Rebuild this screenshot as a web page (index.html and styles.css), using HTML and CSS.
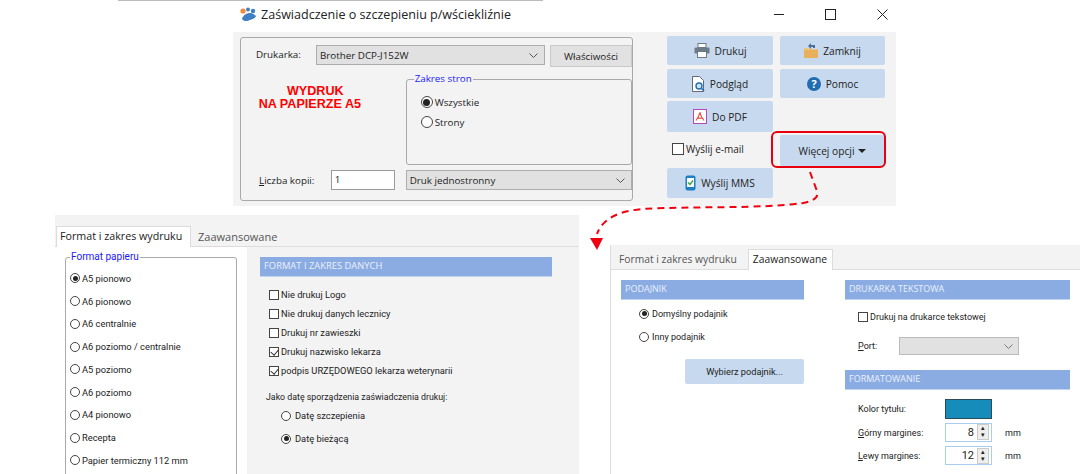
FILE: index.html
```html
<!DOCTYPE html>
<html lang="pl">
<head>
<meta charset="utf-8">
<title>Zaświadczenie o szczepieniu</title>
<link rel="stylesheet" href="styles.css">
</head>
<body>
<div class="canvas">
  <div class="top-rule"></div>

  <section class="win win-print">
    <header class="titlebar">
      <svg class="logo" width="17" height="15" viewBox="0 0 17 15"><circle cx="3" cy="4" r="2.6" fill="#f08a3c"/><circle cx="8" cy="2.6" r="2" fill="#3f7fc4"/><circle cx="13" cy="4" r="2.2" fill="#3f7fc4"/><path d="M2 12c1-4 5-6 8-6s5 2 6 3c-1 3-4 3-6 4s-6 2-8-1z" fill="#3f7fc4"/></svg>
      <h1 class="title">Zaświadczenie o szczepieniu p/wściekliźnie</h1>
      <div class="controls">
        <svg width="11" height="11" viewBox="0 0 11 11"><path d="M1 5.5h10" stroke="#222" fill="none"/></svg>
        <svg width="11" height="11" viewBox="0 0 11 11"><rect x=".5" y=".5" width="10" height="10" stroke="#222" fill="none"/></svg>
        <svg width="11" height="11" viewBox="0 0 11 11"><path d="M.5.5l10 10M10.5.5l-10 10" stroke="#222" fill="none"/></svg>
      </div>
    </header>
    <div class="print-body">
      <div class="group">
        <div class="row-printer">
          <span class="lbl-printer">Drukarka:</span>
          <div class="select select-printer">Brother DCP-J152W<svg class="chev" width="9" height="5" viewBox="0 0 9 5"><path d="M.5.5l4 4 4-4" fill="none" stroke="#555"/></svg></div>
          <button class="btn-gray">Właściwości</button>
        </div>
        <div class="row-middle">
          <p class="a5-note">WYDRUK<br>NA PAPIERZE A5</p>
          <fieldset class="range">
            <legend>Zakres stron</legend>
            <label class="opt opt-range"><input type="radio" name="r1" checked>Wszystkie</label>
            <label class="opt opt-range"><input type="radio" name="r1">Strony</label>
          </fieldset>
        </div>
        <div class="row-copies">
          <span class="lbl-copies"><u>L</u>iczba kopii:</span>
          <div class="field-copies">1</div>
          <div class="select select-duplex">Druk jednostronny<svg class="chev" width="9" height="5" viewBox="0 0 9 5"><path d="M.5.5l4 4 4-4" fill="none" stroke="#555"/></svg></div>
        </div>
      </div>
      <div class="actions">
        <button class="btn h29">
          <svg width="16" height="15" viewBox="0 0 16 15"><rect x="4" y="0.5" width="8" height="4" fill="#fff" stroke="#6d7a88"/><rect x="0.5" y="4.5" width="15" height="6" rx="1" fill="#6d7a88"/><rect x="3.5" y="8.5" width="9" height="6" fill="#fff" stroke="#6d7a88"/></svg>Drukuj</button>
        <button class="btn h29">
          <svg class="i-zamk" width="14" height="15" viewBox="0 0 14 15"><path d="M0 5h5l1 1h8v9H0z" fill="#efc27a"/><path d="M0 7h14v8H0z" fill="#e9b05c"/><path d="M4 3l3-3v2h4v3H9V4H7v2z" fill="#4a6f99"/></svg>Zamknij</button>
        <button class="btn h29 pad-podglad">
          <svg width="13" height="16" viewBox="0 0 13 16"><path d="M.5.5h7l4 4v11H.5z" fill="#fff" stroke="#667"/><circle cx="7" cy="10" r="3" fill="#cfe4f6" stroke="#1f6fb5" stroke-width="1.4"/><path d="M9 12l3 3" stroke="#1f6fb5" stroke-width="1.6"/></svg>Podgląd</button>
        <button class="btn h29">
          <svg width="14" height="14" viewBox="0 0 14 14"><circle cx="7" cy="7" r="7" fill="#1f6cb0"/><text class="qmark" x="7" y="11" text-anchor="middle">?</text></svg>Pomoc</button>
        <button class="btn h31">
          <svg width="14" height="15" viewBox="0 0 14 15"><rect x="0.5" y="0.5" width="13" height="14" fill="#fff" stroke="#b348b8"/><path d="M7 3c-.6 3-2 6-4 8.500M7 3c.2 3 2 6 4 8.500M4 9.500c2-.6 4-.6 6.500 0" fill="none" stroke="#e2574c" stroke-width="1.2"/></svg>Do PDF</button>
        <div class="slot-empty"></div>
        <label class="opt opt-mail"><input type="checkbox">Wyślij e-mail</label>
        <button class="btn h31 btn-more">Więcej opcji<span class="caret"></span></button>
        <button class="btn h30">
          <svg width="11" height="16" viewBox="0 0 11 16"><rect x="0.5" y="0.5" width="10" height="15" rx="2" fill="#1d7fc4"/><rect x="2" y="3" width="7" height="9" fill="#fff"/><path d="M3 7.500l2 2 3-4" stroke="#3aa53a" stroke-width="1.4" fill="none"/></svg>Wyślij MMS</button>
      </div>
    </div>
  </section>

  <section class="win win-format">
    <div class="tabbar tabbar-left">
      <span class="tab tab-on tab-a">Format i zakres wydruku</span>
      <span class="tab tab-off">Zaawansowane</span>
    </div>
    <div class="format-body">
      <div class="paper-col">
        <fieldset class="paper">
          <legend>Format papieru</legend>
          <label class="opt opt-paper"><input type="radio" name="p" checked>A5 pionowo</label>
          <label class="opt opt-paper"><input type="radio" name="p">A6 pionowo</label>
          <label class="opt opt-paper"><input type="radio" name="p">A6 centralnie</label>
          <label class="opt opt-paper"><input type="radio" name="p">A6 poziomo / centralnie</label>
          <label class="opt opt-paper"><input type="radio" name="p">A5 poziomo</label>
          <label class="opt opt-paper"><input type="radio" name="p">A6 poziomo</label>
          <label class="opt opt-paper"><input type="radio" name="p">A4 pionowo</label>
          <label class="opt opt-paper"><input type="radio" name="p">Recepta</label>
          <label class="opt opt-paper"><input type="radio" name="p">Papier termiczny 112 mm</label>
        </fieldset>
      </div>
      <div class="data-col">
        <h2 class="band band-data">FORMAT I ZAKRES DANYCH</h2>
        <div class="checks">
          <label class="opt"><input type="checkbox">Nie drukuj Logo</label>
          <label class="opt"><input type="checkbox">Nie drukuj danych lecznicy</label>
          <label class="opt"><input type="checkbox">Drukuj nr zawieszki</label>
          <label class="opt"><input type="checkbox" checked>Drukuj nazwisko lekarza</label>
          <label class="opt"><input type="checkbox" checked>podpis URZĘDOWEGO lekarza weterynarii</label>
        </div>
        <p class="date-lbl">Jako datę sporządzenia zaświadczenia drukuj:</p>
        <div class="date-opts">
          <label class="opt"><input type="radio" name="d">Datę szczepienia</label>
          <label class="opt"><input type="radio" name="d" checked>Datę bieżącą</label>
        </div>
      </div>
    </div>
  </section>

  <section class="win win-adv">
    <div class="tabbar tabbar-right">
      <span class="tab tab-off tab-first">Format i zakres wydruku</span>
      <span class="tab tab-on tab-b">Zaawansowane</span>
    </div>
    <div class="adv-body">
      <div class="adv-left">
        <h2 class="band">PODAJNIK</h2>
        <div class="feed-opts">
          <label class="opt"><input type="radio" name="f" checked>Domyślny podajnik</label>
          <label class="opt"><input type="radio" name="f">Inny podajnik</label>
        </div>
        <button class="btn btn-feed">Wybierz podajnik...</button>
      </div>
      <div class="adv-right">
        <h2 class="band">DRUKARKA TEKSTOWA</h2>
        <label class="opt opt-text"><input type="checkbox">Drukuj na drukarce tekstowej</label>
        <div class="port-row">
          <span class="port-lbl"><u>P</u>ort:</span>
          <div class="select select-port"><svg class="chev" width="9" height="5" viewBox="0 0 9 5"><path d="M.5.5l4 4 4-4" fill="none" stroke="#777"/></svg></div>
        </div>
        <h2 class="band band-fmt">FORMATOWANIE</h2>
        <div class="fmt-grid">
          <span>Kolor tytułu:</span><div class="swatch"></div><span></span>
          <span><u>G</u>órny margines:</span>
          <div class="spin">8<span class="spin-btns"><i>▴</i><i>▾</i></span></div><span>mm</span>
          <span><u>L</u>ewy margines:</span>
          <div class="spin">12<span class="spin-btns"><i>▴</i><i>▾</i></span></div><span>mm</span>
        </div>
      </div>
    </div>
  </section>

  <svg class="arrow" width="1080" height="474" viewBox="0 0 1080 474">
    <path d="M810 172l7 19c2 7-4 10-14 12-40 6-110 3-160 6-24 2-40 9-46 25" fill="none" stroke="#f0000f" stroke-width="2" stroke-dasharray="7 5"/>
    <path d="M590 238h13l-6 12z" fill="#f0000f"/>
  </svg>
</div>
</body>
</html>
```

FILE: styles.css
```css
* { box-sizing: border-box; }
html, body { margin: 0; padding: 0; background: #fff; }
body { font-family: "Open Sans", "Noto Sans", sans-serif; font-size: 9.8px; color: #222; }
p, h1, h2 { margin: 0; font-weight: 400; }
button { font: inherit; color: inherit; cursor: default; }

.canvas { position: relative; width: 1080px; height: 474px; overflow: hidden; background: #fff; }
.top-rule { position: absolute; left: 118px; top: 0; width: 425px; height: 1px; background: #bbb; }
.win { position: absolute; }
.arrow { position: absolute; left: 0; top: 0; pointer-events: none; }

/* print window */
.win-print { left: 233px; top: 0; width: 663px; height: 206px; }
.titlebar { display: flex; align-items: center; height: 32px; padding-left: 7px; }
.logo { flex: none; margin-top: -3px; }
.title { margin-left: 4px; font-size: 12.55px; margin-top: -3px; }
.controls { display: flex; gap: 41px; margin-left: auto; margin-right: 8px; margin-top: -3px; }
.print-body { display: flex; height: 174px; background: #f3f3f3; padding: 4px 0 0 7px; }
.group { width: 393px; height: 164px; margin-top: 1px; border: 1px solid #a9a9a9; border-radius: 3px; padding: 7px 0 0 15px; }
.row-printer { display: flex; align-items: flex-start; }
.lbl-printer { width: 60px; line-height: 20px; }
.select { display: flex; align-items: center; justify-content: space-between; background: #e1e1e1; border: 1px solid #adadad; padding: 0 6px 0 3px; height: 20px; }
.select-printer { width: 229px; }
.btn-gray { margin-left: 5px; width: 82px; height: 22px; background: #e1e1e1; border: 1px solid #c9c9c9; padding: 0; }
.row-middle { display: flex; height: 93px; margin-top: 5px; }
.a5-note { width: 108px; margin-top: 13px; text-align: center; text-indent: 11px; color: #f00; font-family: "Liberation Sans", Arial, sans-serif; font-weight: 700; font-size: 12.6px; line-height: 13px; }
.range { margin: 0 0 0 42px; padding: 6px 0 0 14px; width: 227px; height: 93px; border: 1px solid #a9a9a9; border-radius: 3px; }
.range legend, .paper legend { color: #1a1aff; padding: 0 1px; line-height: 14px; }
.range legend { margin-left: -7px; }
.opt { display: flex; align-items: center; }
.opt input { appearance: none; margin: 0 2px 0 0; flex: none; width: 10px; height: 10px; border: 1px solid #444; background: #fff; position: relative; }
.opt input[type=radio] { border-radius: 50%; }
.opt input[type=radio]:checked::after { content: ""; position: absolute; inset: 1.500px; border-radius: 50%; background: #222; }
.opt input[type=checkbox]:checked::after { content: ""; position: absolute; left: 2px; top: 0; width: 4px; height: 6px; border: solid #333; border-width: 0 1px 1px 0; transform: rotate(40deg); }
.opt-range { height: 20px; }
.opt-range input { width: 12px; height: 12px; }
.row-copies { display: flex; align-items: center; margin-top: 5px; }
.lbl-copies { width: 75px; padding-left: 3px; }
.field-copies { width: 64px; height: 20px; background: #fff; border: 1px solid #9a9a9a; padding-left: 3px; line-height: 17px; }
.select-duplex { width: 227px; margin-left: 11px; }

.actions { display: grid; grid-template-columns: 113px 105px; grid-template-rows: 33px 32px 34px 33px 30px; margin-left: 34px; }
.btn { display: flex; align-items: center; justify-content: center; gap: 5px; background: #c7d9ee; border: 0; border-radius: 2px; padding: 0; width: 106px; font-size: 10.2px; }
.actions > .btn:nth-child(even) { width: 105px; }
.h29 { height: 29px; }
.h31 { height: 31px; }
.h30 { height: 30px; }
.slot-empty { height: 31px; }
.opt-mail { padding-left: 5px; height: 27px; font-size: 10px; }
.opt-mail input { width: 12px; height: 12px; }
.btn-more { position: relative; gap: 4px; }
.btn-more::after { content: ""; position: absolute; left: -9px; right: -1px; top: -4px; bottom: -2px; border: 2px solid #e8000f; border-radius: 6px; }
.caret { width: 0; height: 0; border: 4px solid transparent; border-top-color: #222; border-bottom: 0; margin-top: 1px; }
.qmark { font: 700 11px "Open Sans", sans-serif; fill: #fff; }

/* tabs */
.tabbar { display: flex; align-items: flex-end; background: #f3f3f3; border-bottom: 1px solid #dcdcdc; }
.tab { line-height: 19px; }
.tab-off { color: #555; }
.tab-on { background: #fff; border: 1px solid #dcdcdc; border-bottom: 0; height: 21px; position: relative; top: 1px; }

/* format window */
.win-format { left: 55px; top: 215px; width: 524px; height: 259px; }
.tabbar-left { height: 32px; padding-left: 1px; font-size: 10.7px; }
.tab-a { width: 135px; padding-left: 3px; }
.tabbar-left .tab-off { margin-left: 7px; font-size: 11px; }
.format-body { display: flex; height: 227px; font-family: Roboto, "Open Sans", sans-serif; font-size: 9.3px; }
.paper-col { width: 192px; background: #fff; padding: 3px 0 0 10px; }
.paper { margin: 0; width: 172px; height: 240px; border: 1px solid #a9a9a9; border-radius: 3px; padding: 3px 0 0 4px; }
.paper legend { margin-left: 0; font-size: 10px; }
.opt-paper { height: 22.75px; }
.data-col { flex: 1; background: #f3f3f3; padding: 10px 0 0 13px; }
.band { background: #8aace3; color: #eaf0fb; font-family: "Open Sans", sans-serif; font-size: 9px; padding-left: 4px; line-height: 18px; height: 20px; width: 183px; border-bottom: 1px solid #c3d4f0; }
.band-data { width: 292px; font-size: 9.4px; }
.checks { display: grid; grid-auto-rows: 19px; margin: 8px 0 0 9px; }
.date-lbl { margin: 9px 0 0 6px; line-height: 16px; font-size: 8.8px; }
.date-opts { display: grid; grid-auto-rows: 23px; margin: -1px 0 0 21px; }
.date-opts input { margin-right: 4px; }

/* advanced window */
.win-adv { left: 610px; top: 245px; width: 470px; height: 229px; border-left: 1px solid #dcdcdc; }
.tabbar-right { height: 25px; font-size: 10.3px; }
.tab-first { margin-left: 8px; }
.tab-b { margin-left: 11px; width: 85px; padding-left: 4px; color: #222; }
.adv-body { display: flex; padding: 10px 0 0 10px; font-family: Roboto, "Open Sans", sans-serif; font-size: 9px; }
.adv-left { width: 183px; }
.feed-opts { display: grid; grid-auto-rows: 23px; margin: 2px 0 0 18px; }
.feed-opts input { margin-right: 3px; }
.btn-feed { margin: 11px 0 0 64px; width: 119px; height: 25px; font-size: 9.2px; }
.adv-right { width: 225px; margin-left: 41px; }
.adv-right .band { width: 225px; }
.opt-text { margin: 10px 0 0 13px; height: 13px; }
.port-row { display: flex; align-items: center; margin: 14px 0 0 13px; }
.port-lbl { width: 41px; }
.select-port { width: 120px; height: 18px; border-color: #bbb; padding-right: 5px; justify-content: flex-end; }
.band-fmt { margin-top: 15px; }
.fmt-grid { display: grid; grid-template-columns: 87px 47px auto; grid-auto-rows: 23.5px; align-items: start; margin: 9px 0 0 13px; }
.fmt-grid > span { line-height: 20px; }
.fmt-grid > span:nth-child(3n) { padding-left: 13px; }
.swatch { height: 20px; background: #158cba; border: 1px solid #2b4a5c; }
.spin { display: flex; align-items: center; justify-content: flex-end; height: 19px; background: #fff; border: 1px solid #a8cdf0; font-size: 11px; padding-right: 2px; }
.spin-btns { display: grid; width: 12px; height: 16px; margin-left: 3px; background: #eee; border: 1px solid #ccc; }
.spin-btns i { font-style: normal; font-size: 7px; line-height: 7px; text-align: center; }
```
